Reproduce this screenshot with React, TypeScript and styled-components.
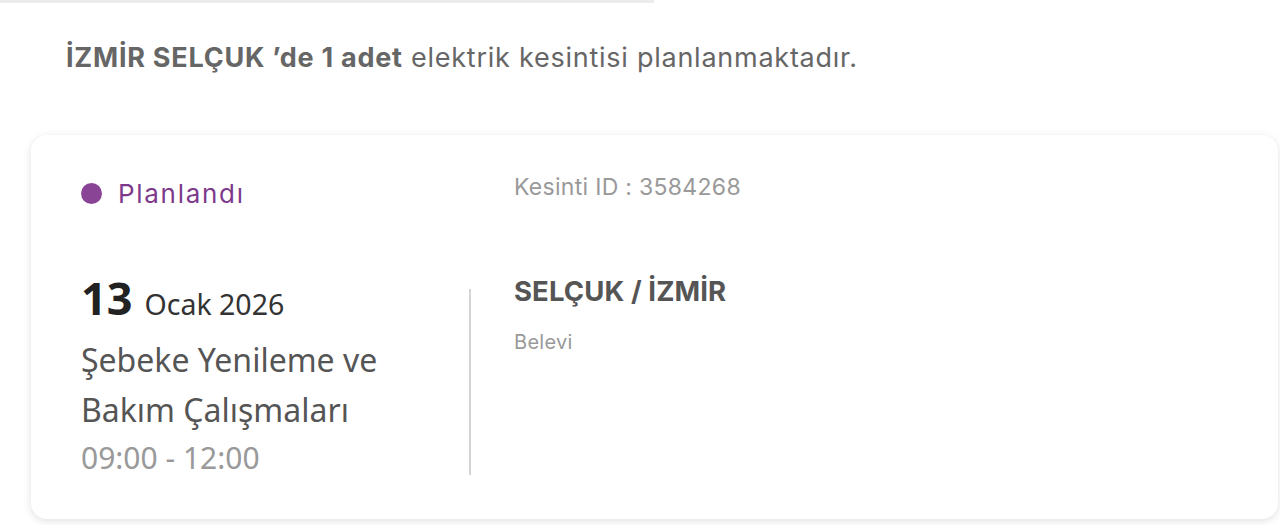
import styled, { createGlobalStyle } from 'styled-components'

const GlobalStyle = createGlobalStyle`
  html, body {
    margin: 0;
    padding: 0;
    background: #fff;
  }
  * {
    box-sizing: border-box;
  }
`

const Page = styled.div`
  width: 1280px;
  height: 525px;
  overflow: hidden;
  font-family: Inter, 'Liberation Sans', sans-serif;
`

const TopLine = styled.div`
  width: 654px;
  height: 3px;
  background: #ececec;
`

const Ozet = styled.p`
  margin: 0;
  padding: 37px 0 0 66px;
  font-size: 27px;
  line-height: 36px;
  color: #666;
  letter-spacing: 0.75px;

  b {
    font-weight: 700;
  }
`

const Kart = styled.div`
  margin: 59px 2px 0 31px;
  height: 384px;
  background: #fff;
  border-radius: 16px;
  box-shadow: 0 2px 8px rgba(0, 0, 0, 0.12);
  padding: 36px 50px 0 50px;
  display: grid;
  grid-template-columns: 388px 2px 1fr;
  grid-template-rows: 80px auto;
`

const UstSol = styled.div`
  display: flex;
  align-items: center;
  gap: 16px;
  height: 44px;
`

const Nokta = styled.span`
  width: 21px;
  height: 21px;
  border-radius: 50%;
  background: #8a4496;
`

const Durum = styled.span`
  font-size: 26px;
  letter-spacing: 1.7px;
  color: #7d3a8c;
`

const KesintiId = styled.div`
  grid-column: 3;
  padding-left: 43px;
  font-size: 23px;
  letter-spacing: 0.3px;
  line-height: 32px;
  color: #999;
`

const Sol = styled.div`
  grid-row: 2;
  padding-top: 21px;
  font-family: 'Noto Sans', 'Open Sans', sans-serif;
`

const Tarih = styled.div`
  display: flex;
  align-items: baseline;
  gap: 12px;
  color: #333;
`

const Gun = styled.span`
  font-size: 45px;
  font-weight: 700;
  color: #222;
  line-height: 52px;
`

const AyYil = styled.span`
  font-size: 28.5px;
`

const Baslik = styled.div`
  margin-top: 11px;
  font-size: 32px;
  line-height: 50px;
  color: #555;
`

const Saat = styled.div`
  margin-top: 6px;
  font-size: 30px;
  line-height: 34px;
  color: #999;
`

const Ayirac = styled.div`
  grid-row: 2;
  grid-column: 2;
  width: 2px;
  margin-top: 38px;
  height: 186px;
  background: #d4d4d4;
`

const Sag = styled.div`
  grid-row: 2;
  grid-column: 3;
  padding: 22px 0 0 43px;
`

const Konum = styled.div`
  font-size: 27.5px;
  font-weight: 700;
  letter-spacing: 0.1px;
  line-height: 36px;
  color: #555;
`

const Mahalle = styled.div`
  margin-top: 21px;
  font-size: 20px;
  letter-spacing: 0.3px;
  color: #999;
`

export default function App() {
  return (
    <Page>
      <GlobalStyle />
      <TopLine />
      <Ozet>
        <b>İZMİR SELÇUK ’de 1 adet</b> elektrik kesintisi planlanmaktadır.
      </Ozet>
      <Kart>
        <UstSol>
          <Nokta />
          <Durum>Planlandı</Durum>
        </UstSol>
        <KesintiId>Kesinti ID : 3584268</KesintiId>
        <Sol>
          <Tarih>
            <Gun>13</Gun>
            <AyYil>Ocak 2026</AyYil>
          </Tarih>
          <Baslik>
            Şebeke Yenileme ve
            <br />
            Bakım Çalışmaları
          </Baslik>
          <Saat>09:00 - 12:00</Saat>
        </Sol>
        <Ayirac />
        <Sag>
          <Konum>SELÇUK / İZMİR</Konum>
          <Mahalle>Belevi</Mahalle>
        </Sag>
      </Kart>
    </Page>
  )
}
